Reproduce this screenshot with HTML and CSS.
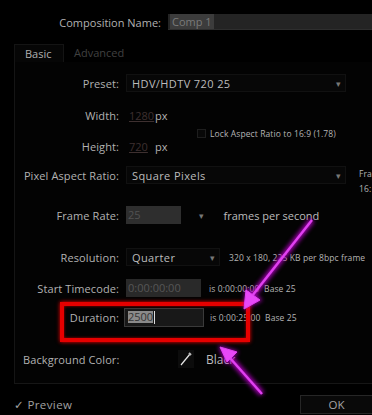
FILE: index.html
```html
<!DOCTYPE html>
<html lang="en">
<head>
  <meta charset="UTF-8" />
  <title>Composition Settings</title>
  <link rel="stylesheet" href="styles.css">
</head>
<body>

<div class="dialog">
  <!-- Name -->
  <div class="name-row">
    <span class="name-label">Composition Name:</span>
    <div class="name-input"><span class="name-sel">Comp 1</span></div>
  </div>

  <!-- Tabs -->
  <div class="tabs">
    <div class="tab active">Basic</div>
    <div class="tab">Advanced</div>
  </div>

  <div class="panel">
    <div class="row r-preset">
      <span class="label">Preset:</span>
      <div class="select wide"><span>HDV/HDTV 720 25</span><span class="arrow">▾</span></div>
    </div>

    <div class="row r-width">
      <span class="label">Width:</span>
      <span class="num">1280</span><span class="unit">px</span>
    </div>

    <div class="row r-lock">
      <span class="check"></span>
      <span class="small">Lock Aspect Ratio to 16:9 (1.78)</span>
    </div>

    <div class="row r-height">
      <span class="label">Height:</span>
      <span class="num">720</span><span class="unit">px</span>
    </div>

    <div class="row r-par">
      <span class="label">Pixel Aspect Ratio:</span>
      <div class="select wide"><span>Square Pixels</span><span class="arrow">▾</span></div>
      <div class="side small">Fra<br>16:</div>
    </div>

    <div class="row r-fps">
      <span class="label">Frame Rate:</span>
      <div class="field fps">25</div>
      <span class="arrow solo">▾</span>
      <span class="fps-text">frames per second</span>
    </div>

    <div class="row r-res">
      <span class="label">Resolution:</span>
      <div class="select short"><span>Quarter</span><span class="arrow">▾</span></div>
      <span class="small info">320 x 180, 225 KB per 8bpc frame</span>
    </div>

    <div class="row r-start">
      <span class="label">Start Timecode:</span>
      <div class="field tc">0:00:00:00</div>
      <span class="small info">is 0:00:00:00 &nbsp;Base 25</span>
    </div>

    <div class="row r-dur">
      <span class="label">Duration:</span>
      <div class="field dur"><span class="dur-sel">2500</span><span class="caret"></span></div>
      <span class="small info">is 0:00:25:00 &nbsp;Base 25</span>
    </div>

    <div class="row r-bg">
      <span class="label left">Background Color:</span>
      <div class="swatch">
        <svg width="14" height="16" viewBox="0 0 14 16">
          <path d="M2 14 L11 3" stroke="#e8e8e8" stroke-width="1.2" fill="none"/>
          <path d="M10 2 L12 4" stroke="#bbb" stroke-width="2" fill="none"/>
        </svg>
      </div>
      <span class="bg-name">Black</span>
    </div>
  </div>

  <div class="footer">
    <span class="preview">✓ Preview</span>
    <div class="ok">OK</div>
  </div>
</div>

<!-- annotation overlay -->
<div class="redbox"></div>
<svg class="marks" width="372" height="415" viewBox="0 0 372 415">
  <defs>
    <filter id="glow" x="-50%" y="-50%" width="200%" height="200%">
      <feGaussianBlur stdDeviation="2.2"/>
    </filter>
  </defs>
  <g filter="url(#glow)" stroke="#b000c0" fill="#b000c0" opacity="0.9">
    <path d="M312 220 L252 296" stroke-width="6"/>
    <path d="M244 309 L246 288 L262 300 Z"/>
    <path d="M262 394 L230 358" stroke-width="6"/>
    <path d="M219 346 L238 352 L226 364 Z"/>
  </g>
  <g stroke="#e040f0" fill="#e848f8">
    <path d="M312 220 L252 296" stroke-width="2.5"/>
    <path d="M244 309 L246 290 L260 300 Z"/>
    <path d="M262 394 L230 358" stroke-width="2.5"/>
    <path d="M220 347 L237 352 L227 362 Z"/>
  </g>
</svg>

</body>
</html>
```

FILE: styles.css
```css
* { margin: 0; padding: 0; box-sizing: border-box; }
body {
  font-family: 'Open Sans', 'DejaVu Sans', sans-serif;
  font-size: 11px;
  background: #000;
  color: #b2b2b2;
  width: 372px;
  height: 415px;
  overflow: hidden;
  position: relative;
}

.dialog { width: 372px; height: 415px; }

/* name */
.name-row {
  display: flex;
  align-items: center;
  height: 44px;
}
.name-label {
  width: 161px;
  text-align: right;
  margin-right: 7px;
}
.name-input {
  flex: 1;
  height: 16px;
  background: #242424;
  border-bottom: 1px solid #2e2e2e;
  padding-left: 2px;
  line-height: 15px;
}
.name-sel {
  background: #3c3c3c;
  color: #7a7a7a;
  padding: 0 2px;
}

/* tabs */
.tabs {
  display: flex;
  height: 18px;
  margin-left: 14px;
}
.tab {
  padding: 0 10px;
  line-height: 18px;
  color: #404040;
}
.tab.active {
  color: #b0b0b0;
  background: #060606;
  border: 1px solid #141414;
  border-bottom: none;
  width: 50px;
}

/* panel */
.panel {
  margin-left: 14px;
  border-left: 1px solid #151515;
  height: 321px;
  padding-top: 11px;
  background: #030303;
}
.row {
  display: flex;
  align-items: center;
  height: 20px;
  position: relative;
}
.label {
  width: 104px;
  text-align: right;
  margin-right: 7px;
  flex: none;
  letter-spacing: 0.1px;
}
.label.left { text-align: left; padding-left: 8px; width: 163px; margin-right: 0; }

.r-width { margin-top: 12px; }
.r-lock { margin-top: 2px; height: 12px; padding-left: 182px; }
.r-height { margin-top: -3px; }
.r-par { margin-top: 9px; }
.r-fps { margin-top: 20px; }
.r-res { margin-top: 22px; }
.r-start { margin-top: 11px; }
.r-dur { margin-top: 9px; }
.r-bg { margin-top: 22px; }

.select {
  height: 18px;
  background: #070707;
  border: 1px solid #111;
  display: flex;
  align-items: center;
  justify-content: space-between;
  padding: 0 4px 0 5px;
  color: #bcbcbc;
  letter-spacing: 0.4px;
}
.select.wide { width: 220px; }
.select.short { width: 94px; }
.arrow { color: #777; font-size: 9px; }
.arrow.solo { margin-left: 18px; }

.num {
  color: #3e3030;
  text-decoration: underline;
  margin: 0 2px 0 3px;
  width: 24px;
}
.unit { color: #b2b2b2; }

.check {
  width: 9px;
  height: 9px;
  border: 1px solid #1e1e1e;
  background: #080808;
  margin-right: 4px;
}
.small {
  font-size: 8.5px;
  color: #b4b4b4;
  letter-spacing: 0.1px;
}
.side {
  position: absolute;
  left: 344px;
  top: 1px;
  line-height: 15px;
}

.field {
  height: 18px;
  line-height: 18px;
  padding-left: 2px;
}
.fps { width: 55px; background: #2e2e2e; color: #525252; }
.fps-text { margin-left: 20px; font-size: 11px; color: #bcbcbc; letter-spacing: 0; }
.info { margin-left: 8px; }
.r-res .info { margin-left: 9px; }
.tc { width: 75px; background: #292929; color: #565656; }
.dur {
  width: 80px;
  height: 19px;
  background: #181818;
  border: 1px solid #3a3a3a;
  margin-left: -2px;
  display: flex;
  align-items: center;
  padding-left: 3px;
  color: #111;
}
.dur-sel { background: #8a8a8a; color: #333; line-height: 12px; }
.caret { width: 1px; height: 13px; background: #ddd; margin-left: 1px; }
.r-dur .info { margin-left: 6px; }

.swatch {
  width: 16px;
  height: 18px;
  background: #0c0c0c;
  display: flex;
  align-items: center;
  justify-content: center;
}
.bg-name { margin-left: 12px; font-size: 12px; color: #bcbcbc; }

/* footer */
.footer {
  display: flex;
  align-items: center;
  justify-content: space-between;
  border-top: 1px solid #161616;
  margin-left: 14px;
  height: 32px;
  padding-top: 10px;
}
.preview { font-size: 11.5px; color: #a0a0a0; letter-spacing: 0.4px; }
.ok {
  width: 72px;
  height: 19px;
  background: #090909;
  border: 1px solid #262626;
  border-right: none;
  text-align: center;
  line-height: 18px;
  color: #a4a4a4;
  font-size: 11.5px;
}

/* annotations */
.redbox {
  position: absolute;
  left: 60px;
  top: 302px;
  width: 190px;
  height: 40px;
  border: 4px solid #e60000;
  box-shadow: 0 0 4px #ff0000, inset 0 0 3px #b00000;
}
.marks {
  position: absolute;
  left: 0;
  top: 0;
}
```
